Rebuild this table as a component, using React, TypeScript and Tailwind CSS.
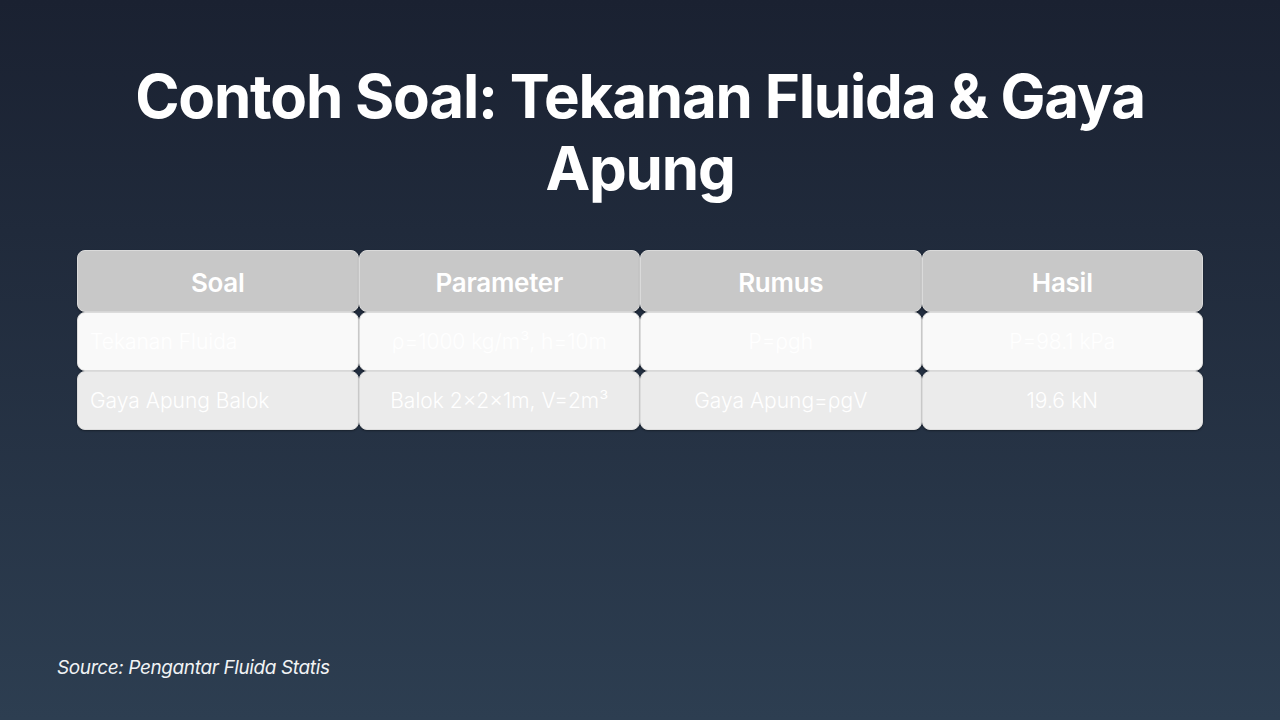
import React from 'react';

const headers = ['Soal', 'Parameter', 'Rumus', 'Hasil'];

const rows = [
  ['Tekanan Fluida', 'ρ=1000 kg/m³, h=10m', 'P=ρgh', 'P=98.1 kPa'],
  ['Gaya Apung Balok', 'Balok 2×2×1m, V=2m³', 'Gaya Apung=ρgV', '19.6 kN'],
];

const App: React.FC = () => {
  return (
    <div
      className="w-[1280px] h-[720px] bg-gradient-to-b from-[#1a2131] to-[#2d3e51] flex flex-col text-white"
      style={{ fontFamily: 'Inter, "Liberation Sans", sans-serif' }}
    >
      {/* Title */}
      <h1 className="mt-[60px] mx-auto max-w-[1060px] text-center text-[60px] leading-[72px] font-bold tracking-[-0.02em]">
        Contoh Soal: Tekanan Fluida &amp; Gaya Apung
      </h1>

      {/* Table */}
      <div className="mt-[46px] mx-[77px] grid grid-cols-4">
        {headers.map((h) => (
          <div
            key={h}
            className="h-[62px] pt-[2px] flex items-center justify-center rounded-lg bg-[#c8c8c8] border border-[#dadada] shadow-[0_1px_2px_rgba(0,0,0,0.35)] text-[26px] font-semibold tracking-[-0.01em]"
          >
            {h}
          </div>
        ))}
        {rows.map((row, ri) =>
          row.map((cell, ci) => (
            <div
              key={`${ri}-${ci}`}
              className={`h-[59px] flex items-center rounded-lg border border-[#dcdcdc] shadow-[0_1px_2px_rgba(0,0,0,0.35)] text-[21px] font-light text-white ${
                ri === 0 ? 'bg-[#f9f9f9]' : 'bg-[#ebebeb]'
              } ${ci === 0 ? 'justify-start pl-3' : 'justify-center'}`}
            >
              {cell}
            </div>
          ))
        )}
      </div>

      {/* Footer */}
      <div className="mt-auto mb-[38px] ml-[57px] text-[19px] italic text-[#f1f3f5] tracking-[-0.02em]">
        Source: Pengantar Fluida Statis
      </div>
    </div>
  );
};

export default App;
